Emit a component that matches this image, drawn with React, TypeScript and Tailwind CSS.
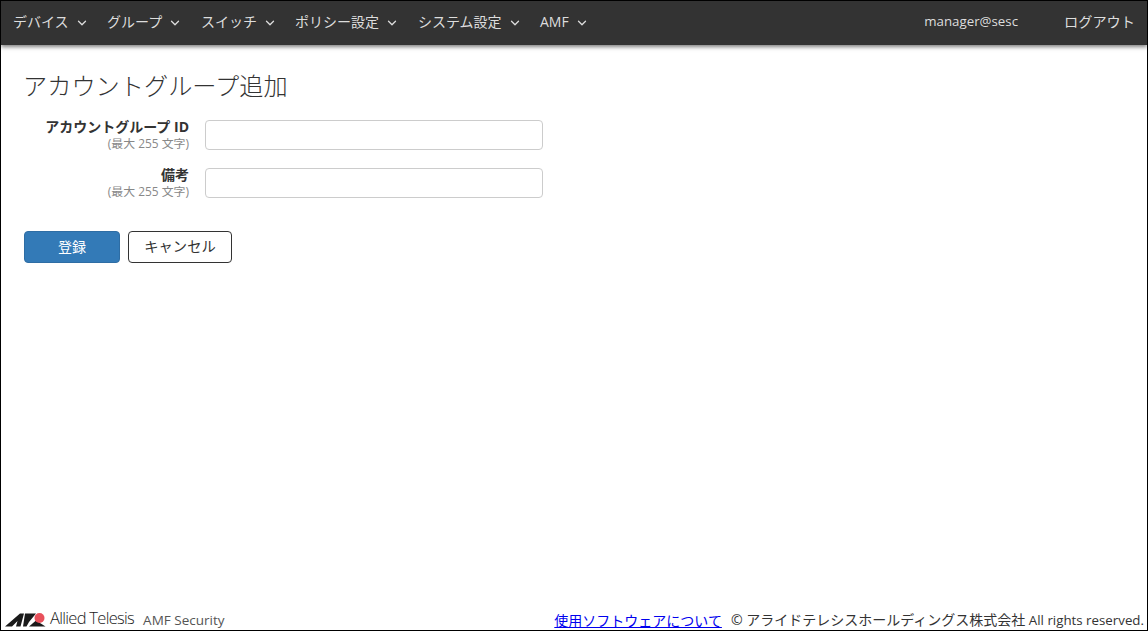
import { ChevronDown } from "lucide-react";

const font = "font-['Open_Sans','Noto_Sans_CJK_JP',sans-serif]";

const menus = [
  { name: "デバイス", w: "w-[94px]" },
  { name: "グループ", w: "w-[94px]" },
  { name: "スイッチ", w: "w-[94px]" },
  { name: "ポリシー設定", w: "w-[123px]" },
  { name: "システム設定", w: "w-[122px]" },
  { name: "AMF", w: "w-[60px]" },
];

function Field({ label }: { label: string }) {
  return (
    <div className="flex h-[48px] items-start">
      <div className="w-[188px] text-right">
        <div className="-mt-[2px] text-[14px] leading-[19px] font-bold text-[#333]">{label}</div>
        <div className="text-[11.9px] leading-[14px] text-[#888]">(最大 255 文字)</div>
      </div>
      <input className="ml-[16px] mt-[1px] h-[30px] w-[338px] rounded-[4px] border border-[#ccc] bg-white" />
    </div>
  );
}

function Logo() {
  return (
    <svg width="41" height="14" viewBox="0 0 41 14">
      <path d="M0 13.5 L15 0.5 L19 0.5 L15.5 13.5 L11 13.5 L12.5 8 L7 13.5 Z" fill="#1a1a1a" />
      <path d="M20 0.5 L31 0.5 L24 9 L21.5 13.5 L18 13.5 Z" fill="#1a1a1a" />
      <path d="M24 13.5 L31 7.5 L40.5 13.5 Z" fill="#1a1a1a" />
      <circle cx="34.5" cy="5" r="5" fill="#e8505b" />
    </svg>
  );
}

export default function App() {
  return (
    <div className={`${font} flex h-[631px] w-[1148px] flex-col overflow-hidden border border-black bg-white text-[#333]`}>
      {/* ヘッダー */}
      <header className="flex h-[44px] shrink-0 items-center bg-[#333] pl-[12px] pr-[12px] text-[14px] text-[#ddd] shadow-[0_2px_4px_rgba(0,0,0,0.5)]">
        {menus.map((m) => (
          <div key={m.name} className={`flex items-center ${m.w}`}>
            <span className="-mt-[3px]">{m.name}</span>
            <ChevronDown size={14} strokeWidth={2.2} className="ml-[6px] text-[#ddd]" />
          </div>
        ))}
        <div className="ml-auto mr-[1px] -mt-[3px] text-[13.3px]">manager@sesc</div>
        <div className="ml-[45px] -mt-[3px] text-[14.2px]">ログアウト</div>
      </header>

      {/* メイン */}
      <main className="flex-1 pl-[23px] pt-[25px]">
        <h1 className="-ml-[1px] text-[24.2px] leading-[32px] font-light text-[#333]">アカウントグループ追加</h1>
        <div className="mt-[17px] -ml-[23px]">
          <Field label="アカウントグループ ID" />
          <Field label="備考" />
        </div>
        <div className="mt-[16px] flex gap-[8px]">
          <button className="h-[32px] w-[96px] rounded-[4px] border border-[#2e6da4] bg-[#337ab7] pb-[2px] text-[14px] text-white">登録</button>
          <button className="h-[32px] w-[104px] rounded-[4px] border border-[#333] bg-white text-[14.3px] text-[#333]">キャンセル</button>
        </div>
      </main>

      {/* フッター */}
      <footer className="flex h-[22px] shrink-0 items-center pl-[4px] pr-[3px] pt-[2px] text-[14px]">
        <Logo />
        <span className="ml-[4px] -mt-[4px] text-[16.5px] font-light tracking-[-0.7px] text-[#222]">Allied Telesis</span>
        <span className="ml-[9px] text-[13.5px] text-[#555]">AMF Security</span>
        <a href="#" className="ml-auto text-[#00e] underline">使用ソフトウェアについて</a>
        <span className="ml-[9px] text-[#333]">
          © アライドテレシスホールディングス株式会社 <span className="text-[13.3px]">All rights reserved.</span>
        </span>
      </footer>
    </div>
  );
}
